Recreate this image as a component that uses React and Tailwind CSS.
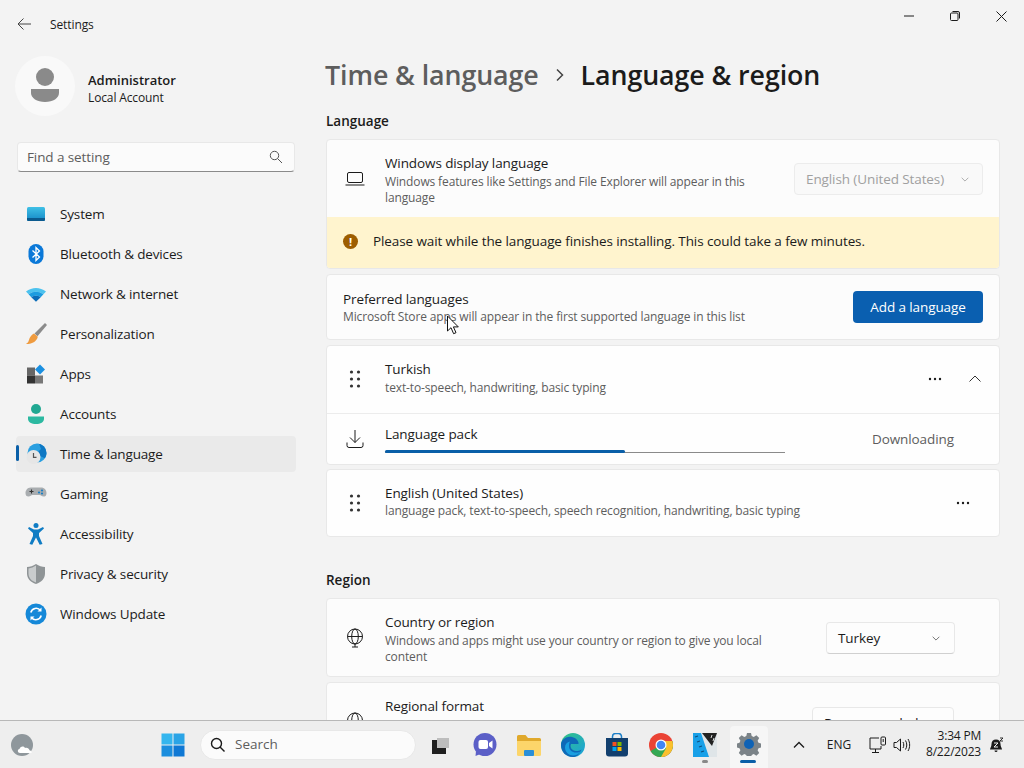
import { useId } from 'react';

const FONT = "font-['Open_Sans','Noto_Sans',sans-serif]";
// Segoe UI runs narrower than Open Sans, so the body sizes are pulled in a little
const BODY = 'text-[13.5px] tracking-[-0.1px]';
const SMALL = 'text-[12px] tracking-[-0.13px]';

function SystemIcon() {
  return (
    <svg width="24" height="24" viewBox="0 0 24 24">
      <defs>
        <linearGradient id="sys" x1="0" y1="0" x2="0" y2="1">
          <stop offset="0" stopColor="#3fc0e6" />
          <stop offset="1" stopColor="#1488c6" />
        </linearGradient>
      </defs>
      <rect x="3" y="5" width="18" height="14" rx="1.5" fill="url(#sys)" />
      <path d="M3 16h18v1.5a1.5 1.5 0 0 1-1.5 1.5h-15A1.5 1.5 0 0 1 3 17.5z" fill="#0b5a8e" />
    </svg>
  );
}

function BluetoothIcon() {
  return (
    <svg width="24" height="24" viewBox="0 0 24 24">
      <rect x="4.5" y="2" width="15" height="20" rx="7.5" fill="#0a78d8" />
      <path d="M8.5 8.5l7 6.5-3.5 3.500V5.500L15.5 9l-7 6.5" fill="none" stroke="#fff" strokeWidth="1.300" />
    </svg>
  );
}

function WifiIcon() {
  return (
    <svg width="24" height="24" viewBox="0 0 24 24">
      <path d="M2 9.5C8 4.800 16 4.800 22 9.5l-2.600 2.800C14.800 9 9.200 9 4.600 12.300z" fill="#4cc2ee" />
      <path d="M4.600 12.300C9.200 9 14.800 9 19.400 12.300l-2.700 2.900c-2.900-1.900-6.500-1.900-9.400 0z" fill="#1c9ce0" />
      <path d="M7.300 15.200c2.900-1.900 6.500-1.900 9.400 0L12 19.800z" fill="#0b6cb8" />
    </svg>
  );
}

function BrushIcon() {
  return (
    <svg width="24" height="24" viewBox="0 0 24 24">
      <path d="M21 1L10.500 11.500l3 2.800L23 3z" fill="#8b8b8b" />
      <path d="M10 11.500l3.800 3.200c-.8 4-4.700 7.300-11.800 7.300 2.800-1.400 2.800-4 3.800-6.200 1-1.900 2.500-3.700 4.200-4.300z" fill="#ef9b3f" />
    </svg>
  );
}

function AppsIcon() {
  return (
    <svg width="24" height="24" viewBox="0 0 24 24">
      <rect x="3" y="5.5" width="8" height="8" fill="#666" />
      <rect x="3" y="13.5" width="8" height="8" fill="#333" />
      <rect x="11" y="13.5" width="8" height="8" fill="#777" />
      <path d="M16 2.5l5 5-5 5-5-5z" fill="#1a8fe0" />
    </svg>
  );
}

function AccountsIcon() {
  return (
    <svg width="24" height="24" viewBox="0 0 24 24">
      <circle cx="12" cy="7" r="5" fill="#20a892" />
      <path d="M4 14.5h16V17c0 3-3.500 5-8 5s-8-2-8-5z" fill="#2cb9a1" />
    </svg>
  );
}

function TimeIcon() {
  return (
    <svg width="24" height="24" viewBox="0 0 24 24">
      <circle cx="13" cy="11" r="9.5" fill="#2a9fe0" />
      <path d="M13 1.500a9.500 9.500 0 0 1 9.500 9.500c0 2-.6 3.800-1.700 5.300L16 14l-2-4 3-3-2-5.300z" fill="#0e78c4" />
      <circle cx="9.5" cy="15" r="7" fill="#e6e6e6" />
      <path d="M9.500 11v4.300h3" fill="none" stroke="#555" strokeWidth="1.200" />
    </svg>
  );
}

function GamingIcon() {
  return (
    <svg width="24" height="24" viewBox="0 0 24 24">
      <path d="M7 5.500h10c3.500 0 5.500 2.500 5.500 5.500s-1.500 3.500-3 3.500c-2 0-2.500-1.500-4-1.500h-7c-1.500 0-2 1.500-4 1.500s-3-1-3-3.500 2-5.500 5-5.500z" fill="#a9adb0" />
      <path d="M5.500 9.500h4M7.500 7.500v4" stroke="#333" strokeWidth="1.100" />
      <circle cx="15" cy="10.5" r="1.100" fill="#1a7fc4" />
      <circle cx="18" cy="8.5" r="1.100" fill="#1a7fc4" />
      <circle cx="18" cy="11.5" r="1.100" fill="#1a7fc4" />
    </svg>
  );
}

function AccessIcon() {
  return (
    <svg width="24" height="24" viewBox="0 0 24 24">
      <circle cx="12" cy="3.5" r="2.5" fill="#0f7cc4" />
      <path d="M4 6.500L5 5l5 2.500h4L19 5l1 1.500-5 4.500v3l3.500 8-2.800.7L12 15.500l-3.700 7.200-2.800-.7L9 14v-3z" fill="#0f7cc4" />
    </svg>
  );
}

function ShieldIcon() {
  return (
    <svg width="24" height="24" viewBox="0 0 24 24">
      <path d="M12 2c3 2 6 2.800 9 3v6.500c0 5-3.500 8.800-9 10.500-5.500-1.700-9-5.500-9-10.500V5c3-.2 6-1 9-3z" fill="#8f9496" />
      <path d="M12 3.500v17c-4.600-1.500-7.500-4.700-7.500-9V6.400c2.700-.3 5.200-1.300 7.500-2.900z" fill="#c9cccd" />
    </svg>
  );
}

function UpdateIcon() {
  return (
    <svg width="24" height="24" viewBox="0 0 24 24">
      <circle cx="12" cy="12" r="10.5" fill="#1588d8" />
      <path d="M6.800 10.500A5.500 5.500 0 0 1 16.500 8.500M17.200 13.500A5.500 5.500 0 0 1 7.500 15.500" fill="none" stroke="#fff" strokeWidth="1.600" />
      <path d="M17.500 5.500v4h-4zM6.500 18.500v-4h4z" fill="#fff" />
    </svg>
  );
}

const NAV = [
  ['System', SystemIcon],
  ['Bluetooth & devices', BluetoothIcon],
  ['Network & internet', WifiIcon],
  ['Personalization', BrushIcon],
  ['Apps', AppsIcon],
  ['Accounts', AccountsIcon],
  ['Time & language', TimeIcon],
  ['Gaming', GamingIcon],
  ['Accessibility', AccessIcon],
  ['Privacy & security', ShieldIcon],
  ['Windows Update', UpdateIcon],
];

function Chevron({ up, size = 12, color = '#5d5d5d' }) {
  return (
    <svg width={size} height={size} viewBox="0 0 12 12" fill="none" stroke={color} strokeWidth="1">
      <path d={up ? 'M.5 8.500L6 3l5.500 5.500' : 'M2 4.500l4 4 4-4'} />
    </svg>
  );
}

function Dots() {
  return (
    <svg width="14" height="4" viewBox="0 0 14 4" fill="#1b1b1b">
      <circle cx="2" cy="2" r="1.200" />
      <circle cx="7" cy="2" r="1.200" />
      <circle cx="12" cy="2" r="1.200" />
    </svg>
  );
}

function Grip() {
  return (
    <svg width="12" height="18" viewBox="0 0 12 18" fill="#333">
      {[2, 9, 16].map((y) => (
        <g key={y}>
          <circle cx="2.5" cy={y} r="1.600" />
          <circle cx="9.5" cy={y} r="1.600" />
        </g>
      ))}
    </svg>
  );
}

function Globe() {
  return (
    <svg width="20" height="20" viewBox="0 0 20 20" fill="none" stroke="#1b1b1b" strokeWidth="1">
      <circle cx="10" cy="8.5" r="7.5" />
      <ellipse cx="10" cy="8.5" rx="3.300" ry="7.5" />
      <path d="M2.500 8.500h15M10 16v3M7 19h6" />
    </svg>
  );
}

function Sidebar() {
  return (
    <aside className="w-[312px] shrink-0 flex flex-col">
      <div className="h-[48px] flex items-center pl-[16px]">
        <svg width="16" height="16" viewBox="0 0 16 16" fill="none" stroke="#444" strokeWidth="1">
          <path d="M15 8H2M7.500 2.500L2 8l5.500 5.500" />
        </svg>
        <span className="ml-[18px] pt-[2px] text-[12px] tracking-[-0.1px] text-[#1b1b1b]">Settings</span>
      </div>
      <div className="flex items-center pl-[15px] h-[60px] mt-[8px]">
        <div className="w-[60px] h-[60px] rounded-full bg-[#f9f9f9] flex items-center justify-center">
          <svg width="32" height="36" viewBox="0 0 32 36" fill="#8a8a8a">
            <circle cx="16" cy="9" r="9" />
            <path d="M2 21h28v4c0 5-6 9-14 9S2 30 2 25z" />
          </svg>
        </div>
        <div className="ml-[13px] mt-[6px] flex flex-col">
          <span className="text-[13px] leading-[18px] font-semibold text-[#1b1b1b]">Administrator</span>
          <span className={`${SMALL} leading-[18px] text-[#1b1b1b]`}>Local Account</span>
        </div>
      </div>
      <div className="mt-[26px] ml-[17px] w-[278px] h-[30px] rounded bg-[#fbfbfb] border border-[#e8e8e8] border-b-[#8a8a8a] flex items-center justify-between pl-[9px] pr-[11px]">
        <span className={`${BODY} text-[#5d5d5d]`}>Find a setting</span>
        <svg width="14" height="14" viewBox="0 0 14 14" fill="none" stroke="#555" strokeWidth="1">
          <circle cx="5.500" cy="5.500" r="4.200" />
          <path d="M8.500 8.500L13 13" />
        </svg>
      </div>
      <nav className="mt-[24px] ml-[16px] w-[280px] flex flex-col gap-[4px]">
        {NAV.map(([label, Icon]) => {
          const active = label === 'Time & language';
          return (
            <div key={label} className={`relative h-[36px] flex items-center pl-[8px] rounded ${active ? 'bg-[#eaeaea]' : ''}`}>
              {active && <span className="absolute left-0 top-[9px] w-[3px] h-[16px] rounded bg-[#0a5fa8]" />}
              <Icon />
              <span className="ml-[12px] text-[13.5px] tracking-[-0.15px] text-[#1b1b1b]">{label}</span>
            </div>
          );
        })}
      </nav>
    </aside>
  );
}

function Card({ className = '', children }) {
  return <div className={`rounded-[4px] border border-[#e8e8e8] bg-[#fcfcfc] overflow-hidden ${className}`}>{children}</div>;
}

function IconCol({ children }) {
  return <div className="w-[58px] pr-[3px] flex justify-center shrink-0">{children}</div>;
}

function Main() {
  return (
    <main className="relative flex-1 min-w-0 flex flex-col pl-[14px] pr-[24px]">
      <div className="h-[32px] -mr-[24px] flex items-center justify-end shrink-0">
        <div className="w-[46px] flex justify-center">
          <svg width="10" height="10" viewBox="0 0 10 10" stroke="#1b1b1b"><path d="M0 5h10" /></svg>
        </div>
        <div className="w-[46px] flex justify-center">
          <svg width="10" height="10" viewBox="0 0 10 10" fill="none" stroke="#1b1b1b">
            <rect x=".5" y="2" width="7.5" height="7.5" rx="1" />
            <path d="M2.500.5H8A1.500 1.500 0 0 1 9.500 2v5.500" />
          </svg>
        </div>
        <div className="w-[46px] flex justify-center">
          <svg width="11" height="11" viewBox="0 0 11 11" stroke="#1b1b1b"><path d="M.5.5l10 10M10.500.5l-10 10" /></svg>
        </div>
      </div>
      <div className="mt-[24px] -ml-[1px] h-[38px] flex items-center shrink-0 text-[26.8px] tracking-[-0.1px] font-semibold leading-[38px] whitespace-nowrap">
        <span className="text-[#5d5d5d]">Time &amp; language</span>
        <span className="mx-[14px]"><svg width="14" height="14" viewBox="0 0 14 14" fill="none" stroke="#444" strokeWidth="1.500"><path d="M4 1.500L9.500 7 4 12.500" /></svg></span>
        <span className="text-[#1b1b1b]">Language &amp; region</span>
      </div>
      <div className="mt-[17px] h-[20px] leading-[20px] text-[13.5px] font-semibold text-[#1b1b1b] shrink-0">Language</div>

      <Card className="mt-[8px] shrink-0">
        <div className="h-[77px] flex items-center">
          <IconCol>
            <svg width="20" height="16" viewBox="0 0 20 16" fill="none" stroke="#1b1b1b" strokeWidth="1">
              <rect x="2.5" y="1.5" width="15" height="10" rx="1.5" />
              <path d="M.5 14h19" />
            </svg>
          </IconCol>
          <div className="flex-1 pt-[2px]">
            <div className={`${BODY} leading-[18px] text-[#1b1b1b]`}>Windows display language</div>
            <div className={`${SMALL} leading-[16px] mt-[2px] text-[#5d5d5d]`}>Windows features like Settings and File Explorer will appear in this<br />language</div>
          </div>
          <div className="w-[189px] h-[32px] mr-[16px] pt-[1px] rounded border border-[#ececec] bg-[#f9f9f9] flex items-center justify-between pl-[11px] pr-[12px]">
            <span className={`${BODY} text-[#a0a0a0]`}>English (United States)</span>
            <Chevron size={10} color="#a0a0a0" />
          </div>
        </div>
        <div className="h-[51px] pb-[2px] bg-[#fff4ce] flex items-center pl-[16px]">
          <span className="w-[15px] h-[15px] rounded-full bg-[#9d5d00] text-white text-[11px] font-bold leading-[15px] text-center">!</span>
          <span className={`ml-[15px] ${BODY} text-[#1b1b1b]`}>Please wait while the language finishes installing. This could take a few minutes.</span>
        </div>
      </Card>

      <Card className="mt-[5px] h-[66px] shrink-0 flex items-center pl-[16px] pr-[16px]">
        <div className="flex-1 pt-[1px]">
          <div className={`${BODY} leading-[18px] text-[#1b1b1b]`}>Preferred languages</div>
          <div className={`${SMALL} leading-[16px] mt-[1px] text-[#5d5d5d]`}>Microsoft Store apps will appear in the first supported language in this list</div>
        </div>
        <div className={`w-[130px] h-[32px] rounded bg-[#0a5fb0] text-white ${BODY} flex items-center justify-center`}>Add a language</div>
      </Card>

      <Card className="mt-[5px] shrink-0 bg-[#fefefe]">
        <div className="h-[68px] pb-[2px] flex items-center border-b border-[#ececec]">
          <IconCol><Grip /></IconCol>
          <div className="flex-1">
            <div className={`${BODY} leading-[17px] text-[#1b1b1b]`}>Turkish</div>
            <div className={`${SMALL} leading-[16px] mt-[2px] text-[#5d5d5d]`}>text-to-speech, handwriting, basic typing</div>
          </div>
          <Dots />
          <div className="ml-[27px] mr-[18px]"><Chevron up color="#333" /></div>
        </div>
        <div className="h-[50px] flex items-center">
          <IconCol>
            <svg width="18" height="20" viewBox="0 0 18 20" fill="none" stroke="#1b1b1b" strokeWidth="1">
              <path d="M9 1v12.500M4 8.500l5 5 5-5M1 13.500v3a2 2 0 0 0 2 2h12a2 2 0 0 0 2-2v-3" />
            </svg>
          </IconCol>
          <div className="w-[400px] self-start pt-[11px]">
            <div className={`${BODY} leading-[18px] text-[#1b1b1b]`}>Language pack</div>
            <div className="relative mt-[9px] h-[1px] bg-[#8a8a8a]">
              <div className="absolute left-0 top-[-2px] h-[3px] w-[240px] rounded-full bg-[#0a5fa8]" />
            </div>
          </div>
          <div className={`ml-[87px] pt-[1px] ${BODY} text-[#5d5d5d]`}>Downloading</div>
        </div>
      </Card>

      <Card className="mt-[4px] h-[68px] shrink-0 flex items-center bg-[#fefefe]">
        <IconCol><Grip /></IconCol>
        <div className="flex-1 pb-[3px]">
          <div className={`${BODY} leading-[18px] text-[#1b1b1b]`}>English (United States)</div>
          <div className={`${SMALL} leading-[16px] mt-[1px] text-[#5d5d5d]`}>language pack, text-to-speech, speech recognition, handwriting, basic typing</div>
        </div>
        <div className="mr-[29px]"><Dots /></div>
      </Card>

      <div className="mt-[33px] h-[20px] leading-[20px] text-[13.5px] font-semibold text-[#1b1b1b] shrink-0">Region</div>

      <Card className="mt-[8px] h-[79px] shrink-0 flex items-center">
        <IconCol><Globe /></IconCol>
        <div className="flex-1 pt-[2px]">
          <div className={`${BODY} leading-[18px] text-[#1b1b1b]`}>Country or region</div>
          <div className={`${SMALL} leading-[16px] mt-[2px] text-[#5d5d5d]`}>Windows and apps might use your country or region to give you local<br />content</div>
        </div>
        <div className="w-[129px] h-[32px] mr-[44px] pt-[1px] rounded border border-[#e8e8e8] border-b-[#d0d0d0] bg-[#fdfdfd] flex items-center justify-between pl-[11px] pr-[13px]">
          <span className={`${BODY} text-[#1b1b1b]`}>Turkey</span>
          <Chevron size={10} />
        </div>
      </Card>

      <Card className="mt-[5px] h-[80px] shrink-0 flex items-start">
        <IconCol><div className="pt-[29px]"><Globe /></div></IconCol>
        <div className="flex-1 pt-[14px]">
          <div className={`${BODY} leading-[18px] text-[#1b1b1b]`}>Regional format</div>
          <div className={`${SMALL} leading-[16px] mt-[3px] text-[#5d5d5d]`}>Windows and some apps format dates and time based on your regional format</div>
        </div>
        <div className="w-[142px] h-[32px] mt-[24px] mr-[15px] rounded border border-[#e8e8e8] bg-[#fdfdfd] pl-[11px] pt-[2px]">
          <span className={`${BODY} text-[#1b1b1b]`}>Recommended</span>
        </div>
        <div className="mt-[34px] mr-[18px]"><Chevron /></div>
      </Card>

      <svg className="absolute left-[134px] top-[315px]" width="14" height="21" viewBox="0 0 14 21">
        <path d="M1.500 1v15L5 12.700l2.600 6 2.400-1-2.600-5.800h4.900z" fill="#fff" stroke="#111" strokeWidth="1" />
      </svg>
    </main>
  );
}

function Slot({ className = '', children }) {
  return <div className={`flex items-center justify-center shrink-0 ${className}`}>{children}</div>;
}

function EdgeIcon() {
  const id = useId();
  return (
    <svg width="24" height="24" viewBox="0 0 24 24">
      <defs>
        <linearGradient id={id} x1="0" y1="0" x2="1" y2="1">
          <stop offset="0" stopColor="#33c481" />
          <stop offset="1" stopColor="#1a9fe0" />
        </linearGradient>
      </defs>
      <circle cx="12" cy="12" r="12" fill={`url(#${id})`} />
      <path d="M0 12C0 6 6 3 11 4c4 .8 7 4 6.500 7H10c-1.500 3 1 7 5 7 2 0 4-.5 5.500-1.500C18.500 21.500 15.500 24 12 24 5 24 0 19 0 12z" fill="#0f69b8" />
      <path d="M8 13c0 4 3 6.500 7 6.500 2 0 3.500-.5 5-1.500-2 3-5 4.500-8 4.500-4 0-8-3.500-8-8 0-3 2-5.500 5-6-.7 1-1 2.800-1 4.500z" fill="#1a9fe0" />
    </svg>
  );
}

function Taskbar() {
  return (
    <footer className="h-[48px] shrink-0 border-t border-[#b8b8b8] bg-[#eeeeee] flex items-center">
      <Slot className="w-[44px]">
        <svg width="24" height="24" viewBox="0 0 24 24">
          <circle cx="12" cy="12" r="11" fill="#8f979c" />
          <path d="M10 20c-2.500 0-3-3.500-.5-4 .5-2.500 4-3.500 5.500-1 2-.8 4 .2 4.500 2.200 2 .3 2.500 2 2 2.800z" fill="#fff" />
        </svg>
      </Slot>
      <Slot className="w-[44px] ml-[107px]">
        <svg width="24" height="24" viewBox="0 0 24 24">
          <rect x=".5" y=".5" width="11" height="11" fill="#35b6ee" />
          <rect x="12.5" y=".5" width="11" height="11" fill="#2aa4e6" />
          <rect x=".5" y="12.5" width="11" height="11" fill="#1b8ede" />
          <rect x="12.5" y="12.5" width="11" height="11" fill="#0f78d4" />
        </svg>
      </Slot>
      <div className="ml-[5px] w-[216px] h-[30px] rounded-full bg-[#fbfbfb] border border-[#e8e8e8] flex items-center pl-[9px]">
        <svg width="15" height="15" viewBox="0 0 15 15" fill="none" stroke="#1b1b1b" strokeWidth="1.400">
          <circle cx="6.5" cy="6.5" r="5" />
          <path d="M10 10l4.500 4.500" />
        </svg>
        <span className="ml-[10px] text-[13.5px] text-[#5d5d5d]">Search</span>
      </div>
      <Slot className="w-[44px] ml-[3px]">
        <svg width="20" height="20" viewBox="0 0 20 20">
          <rect x="1" y="5" width="14" height="14" fill="#1f1f1f" />
          <rect x="6" y="3" width="12" height="10" fill="#bdbdbd" />
        </svg>
      </Slot>
      <Slot className="w-[44px]">
        <svg width="24" height="24" viewBox="0 0 24 24">
          <circle cx="12" cy="11.5" r="11.5" fill="#5b5fc7" />
          <path d="M3 18l-.5 5 5-2z" fill="#5b5fc7" />
          <rect x="5.5" y="7" width="9.5" height="9" rx="2" fill="#fff" />
          <path d="M16 10l3.500-2.500v8L16 13z" fill="#fff" />
        </svg>
      </Slot>
      <Slot className="w-[44px]">
        <svg width="24" height="24" viewBox="0 0 24 24">
          <path d="M0 3.500A1.500 1.500 0 0 1 1.500 2h7L11 5h11.500A1.500 1.500 0 0 1 24 6.500V10H0z" fill="#e0a92c" />
          <path d="M0 8h24v13.500a1.500 1.500 0 0 1-1.500 1.500h-21A1.500 1.500 0 0 1 0 21.500z" fill="#fcd56a" />
          <rect x="7" y="17" width="10" height="6" rx="1" fill="#2a8fd8" />
        </svg>
      </Slot>
      <Slot className="w-[44px]"><EdgeIcon /></Slot>
      <Slot className="w-[44px]">
        <svg width="24" height="24" viewBox="0 0 24 24">
          <path d="M7.500 5V3.500a3 3 0 0 1 3-3h3a3 3 0 0 1 3 3V5" fill="none" stroke="#1c7fc8" strokeWidth="1.500" />
          <path d="M1 5h22v15.500a3 3 0 0 1-3 3H4a3 3 0 0 1-3-3z" fill="#123f6e" />
          <rect x="7.5" y="9" width="4" height="4" fill="#f25022" />
          <rect x="12.5" y="9" width="4" height="4" fill="#7fba00" />
          <rect x="7.5" y="14" width="4" height="4" fill="#00a4ef" />
          <rect x="12.5" y="14" width="4" height="4" fill="#ffb900" />
        </svg>
      </Slot>
      <Slot className="w-[44px]">
        <svg width="24" height="24" viewBox="0 0 24 24">
          <circle cx="12" cy="12" r="12" fill="#ea4335" />
          <path d="M12 12L1.600 18A12 12 0 0 0 12 24c6.600 0 12-5.400 12-12 0-1.400-.2-2.700-.7-4H12z" fill="#34a853" />
          <path d="M12 8h11.300A12 12 0 0 1 12 24l5.200-9z" fill="#fbc02d" />
          <circle cx="12" cy="12" r="5.500" fill="#fff" />
          <circle cx="12" cy="12" r="4.300" fill="#4285f4" />
        </svg>
      </Slot>
      <Slot className="relative w-[44px] h-full">
        <svg width="24" height="24" viewBox="0 0 24 24">
          <rect width="24" height="24" fill="#dfe5e8" />
          <path d="M0 0h8l8 24H0z" fill="#18a0e8" />
          <path d="M9 0h15l-5 13z" fill="#222" />
          <path d="M2 4l3-1M4 9l3-1M6 14l3-1M8 19l3-1" stroke="#0d4f80" strokeWidth="1.200" />
          <path d="M19 2l-1 3M21 5l-1 3" stroke="#ddd" strokeWidth="1" />
        </svg>
        <span className="absolute left-[19px] bottom-[5px] w-[6px] h-[3px] rounded-full bg-[#888]" />
      </Slot>
      <Slot className="relative w-[38px] h-[42px] self-end ml-[3px] mr-[3px] bg-[#f6f6f6] rounded-t">
        <svg width="24" height="24" viewBox="0 0 24 24" className="-mt-[6px]">
          <path d="M10 1h4l.7 3 2 .9 2.700-1.600 2.800 2.800-1.600 2.700.9 2 3 .7v4l-3 .7-.9 2 1.600 2.700-2.800 2.800-2.700-1.600-2 .9-.7 3h-4l-.7-3-2-.9-2.700 1.600-2.800-2.800 1.600-2.700-.9-2-3-.7v-4l3-.7.9-2-1.600-2.700 2.800-2.800 2.700 1.600 2-.9z" fill="#7b8388" />
          <circle cx="12" cy="12" r="5" fill="#0f62b5" />
        </svg>
        <span className="absolute left-[10px] bottom-[5px] w-[16px] h-[3px] rounded-full bg-[#0a5fa8]" />
      </Slot>
      <Slot className="w-[30px] ml-[13px]">
        <svg width="14" height="14" viewBox="0 0 14 14" fill="none" stroke="#1b1b1b" strokeWidth="1.300"><path d="M2 9.500l5-5 5 5" /></svg>
      </Slot>
      <Slot className="w-[46px] ml-[2px] text-[12px] text-[#1b1b1b]">ENG</Slot>
      <Slot className="w-[20px] ml-[6px]">
        <svg width="18" height="18" viewBox="0 0 18 18" fill="none" stroke="#1b1b1b" strokeWidth="1">
          <path d="M10 2H1v11h11v-3M6.500 13v3M3 16.500h7" />
          <rect x="12" y="1" width="4.5" height="8" rx="1" />
          <path d="M14.200 3v3" />
        </svg>
      </Slot>
      <Slot className="w-[20px] ml-[4px]">
        <svg width="18" height="16" viewBox="0 0 18 16" fill="none" stroke="#1b1b1b" strokeWidth="1">
          <path d="M1 5.500v5h2.500l4 3.500V2l-4 3.500zM10 5c1 1.800 1 4.200 0 6M12.500 3.500c1.700 2.800 1.700 6.200 0 9M15 2c2.200 3.700 2.200 8.300 0 12" />
        </svg>
      </Slot>
      <div className="w-[68px] ml-[1px] -mt-[2px] text-right text-[12px] tracking-[-0.2px] leading-[16px] text-[#1b1b1b]">
        <div>3:34 PM</div>
        <div>8/22/2023</div>
      </div>
      <Slot className="w-[16px] ml-[7px]">
        <svg width="15" height="16" viewBox="0 0 15 16">
          <path d="M7 2.500c-3 0-4.500 2-4.500 4.500 0 3-1.500 4-1.500 5.500h12c0-1.500-1.500-2.500-1.500-5.500 0-2.500-1.500-4.500-4.500-4.500z" fill="#1b1b1b" />
          <path d="M5.500 13.500a1.500 1.500 0 0 0 3 0z" fill="#1b1b1b" />
          <path d="M5 6h4l-4 4h4" fill="none" stroke="#eee" strokeWidth="1" />
          <path d="M11 1h3l-3 3h3" fill="none" stroke="#1b1b1b" strokeWidth=".9" />
        </svg>
      </Slot>
    </footer>
  );
}

export default function App() {
  return (
    <div className={`w-[1024px] h-[768px] flex flex-col overflow-hidden bg-[#f3f3f3] ${FONT}`}>
      <div className="flex-1 min-h-0 flex overflow-hidden">
        <Sidebar />
        <Main />
      </div>
      <Taskbar />
    </div>
  );
}
